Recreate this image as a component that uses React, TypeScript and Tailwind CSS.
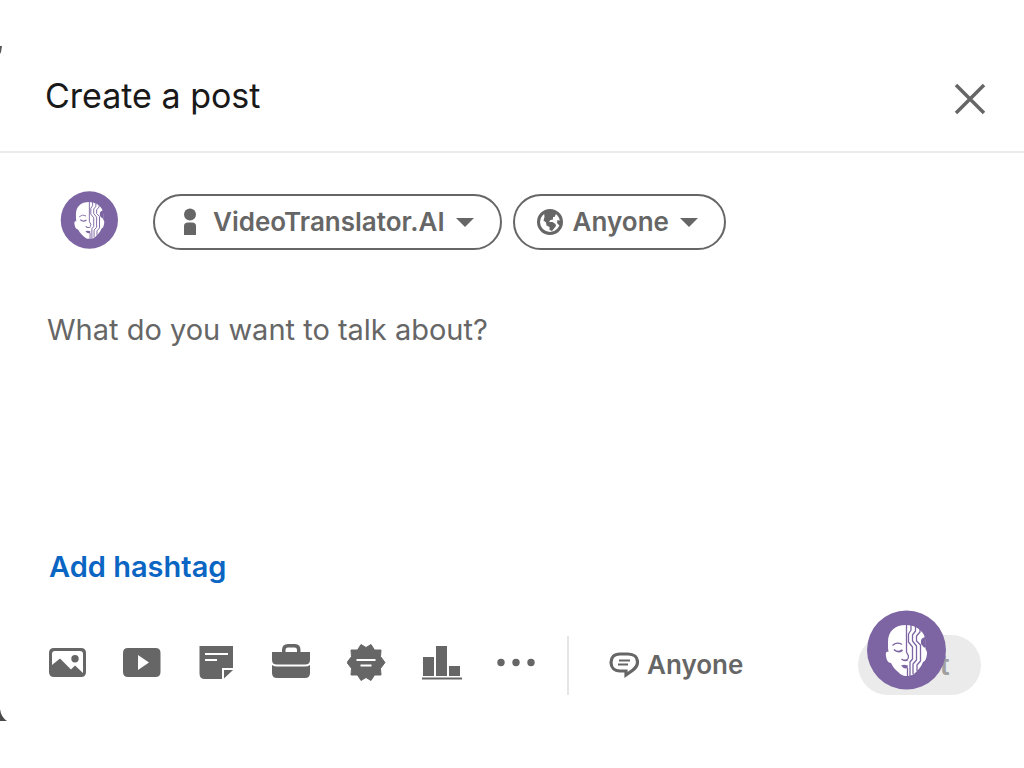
import React from "react";

function Avatar({ className }: { className: string }) {
  return (
    <svg viewBox="0 0 80 80" className={className} role="img" aria-label="VideoTranslator.AI">
      <circle cx="40.500" cy="40" r="39.500" fill="#7c65a2" />
      <path
        d="M40 15C29 15 22 21 22 32C22 36 22 39 22.500 42C20 41 19.500 43 20 46C20.500 50 22 53 25 53C27 58 32 62 35 64.500C37 66 39 66 41 66C44 66 48 65 51 61C54 58 56 55 57 52C59.500 51 60.500 48 61 44C61.500 42 60.500 41 59.500 39C60 35 60 30 58 25C55 19 48 15 40 15Z"
        fill="#fff"
      />
      <g fill="none" stroke="#7c65a2" strokeWidth="1.300" strokeLinejoin="round">
        <path d="M40.500 15V42L42.500 46L42 49M41.500 58V66" />
        <path d="M45 15V20L42.500 24V32L46.500 37V49L44 52V66" />
        <path d="M49.500 16V21L46.500 25V31L50.500 36V50L47 54V64" />
        <path d="M54 19V22L50.500 26V31L54.500 35V51L51 55V61" />
        <path d="M26.500 35.500Q31 31.500 36 34.500" strokeWidth="1.200" />
        <path d="M28 39.500Q32 43.500 36.500 40" strokeWidth="1.700" />
        <path d="M35.500 49Q38.500 51.500 42 49.500" strokeWidth="1.500" />
      </g>
      <path d="M59.500 27L56.500 28L55 30V34L58 37.500H60Z" fill="#7c65a2" />
      <path d="M35 55.500L38 54.800L42 55.500L41.500 58Q38 59.500 35 55.500Z" fill="#7c65a2" />
    </svg>
  );
}

function Caret() {
  return (
    <svg viewBox="0 0 18 9" className="h-[9px] w-[18px]" fill="currentColor" aria-hidden="true">
      <path d="M0 0H18L9 9Z" />
    </svg>
  );
}

const tools = [
  {
    label: "Add a photo",
    art: (
      <path
        fillRule="evenodd"
        d="M7 5H34Q39 5 39 10V29Q39 34 34 34H7Q2 34 2 29V10Q2 5 7 5ZM8 8Q5 8 5 11V22L13 15.500L24 26.500L28 22.500L36 30V11Q36 8 33 8ZM28 12A3.700 3.700 0 1 1 28 19.400A3.700 3.700 0 1 1 28 12Z"
      />
    ),
  },
  {
    label: "Add a video",
    art: <path fillRule="evenodd" d="M6 5H33.500Q38.500 5 38.500 10V29Q38.500 34 33.500 34H6Q1 34 1 29V10Q1 5 6 5ZM16 12V27L27 19.500Z" />,
  },
  {
    label: "Add a document",
    art: (
      <>
        <path fillRule="evenodd" d="M2.500 3H36V25H25V36H8Q2.500 36 2.500 30.500ZM8 10V12H31V10ZM8 16V18H20V16Z" />
        <path d="M27 27H36L27 35.500Z" />
      </>
    ),
  },
  {
    label: "Share a job",
    art: (
      <>
        <path d="M10 9V7Q10 1 16 1H23Q28.500 1 28.500 7V9H38V17Q38 21.500 33 21.500H5Q0 21.500 0 17V9ZM13.500 9H25V7Q25 4.500 22.500 4.500H16Q13.500 4.500 13.500 7Z" fillRule="evenodd" />
        <path d="M0 22Q2 23.500 5 23.500H33Q36 23.500 38 22V30Q38 35 33 35H5Q0 35 0 30Z" />
      </>
    ),
  },
  {
    label: "Celebrate an occasion",
    art: (
      <>
        <path
          d="M14 1.500L19 4.500L24 1.500L27.500 7H34L33.500 13.500L38 19.500L33.500 25.500L34 32H27.500L24 37.500L19 34.500L14 37.500L10.500 32H4L4.500 25.500L0 19.500L4.500 13.500L4 7H10.500Z"
          stroke="currentColor"
          strokeLinejoin="round"
        />
        <path d="M9.500 17H28.500M13.500 22.500H24.500" stroke="#fff" strokeWidth="2" />
      </>
    ),
  },
  {
    label: "Create a poll",
    art: <path d="M1 14H12V33H1ZM14 3H25V33H14ZM27 23H38V33H27ZM0 34.500H40V36.500H0Z" />,
  },
  {
    label: "More options",
    art: (
      <>
        <circle cx="4" cy="19.500" r="3.700" />
        <circle cx="19" cy="19.500" r="3.700" />
        <circle cx="34" cy="19.500" r="3.700" />
      </>
    ),
  },
];

export default function App() {
  return (
    <div className="relative overflow-hidden bg-white pt-10 pb-12 font-['Inter','Liberation_Sans',sans-serif] text-[#666]">
      <svg viewBox="0 0 2 8" className="absolute top-[46px] left-0 h-2 w-0.5" fill="#555" aria-hidden="true">
        <path d="M0 0H2L1 6L0 8Z" />
      </svg>
      <svg viewBox="0 0 7 12" className="absolute bottom-[22px] left-0 h-3 w-[7px]" fill="#4a4a4a" aria-hidden="true">
        <path d="M0 0Q1 8 7 12H0Z" />
      </svg>
      <section role="dialog" aria-labelledby="post-title">
        <header className="flex h-[113px] items-center justify-between border-b-2 border-[#ebebeb] pr-[38px] pl-[45px]">
          <h1 id="post-title" className="text-[34px] leading-[44px] text-[#191919]">
            Create a post
          </h1>
          <button type="button" aria-label="Close" className="mt-1.5">
            <svg viewBox="0 0 32 32" className="size-8" fill="none" stroke="currentColor" strokeWidth="3.500">
              <path d="M2 2L30 30M30 2L2 30" />
            </svg>
          </button>
        </header>

        <div className="flex items-start pt-[38px] pl-[60px]">
          <Avatar className="mr-[35px] size-[58px] shrink-0" />
          <div className="flex gap-[11px] pt-[3px] text-[26px] leading-8 font-semibold">
            <button type="button" className="flex h-14 items-center rounded-full border-2 border-[#666] pr-[26px] pl-7 whitespace-nowrap">
              <svg viewBox="0 0 14 28" className="mr-4 h-7 w-3.5" fill="currentColor" aria-hidden="true">
                <circle cx="7" cy="6.500" r="6" />
                <path d="M1 27V18Q1 14.500 5 14.500H9Q13 14.500 13 18V27Z" />
              </svg>
              <span className="mr-[11px]">VideoTranslator.AI</span>
              <Caret />
            </button>
            <button type="button" className="flex h-14 items-center rounded-full border-2 border-[#666] pr-[26px] pl-[22px] whitespace-nowrap">
              <svg viewBox="0 0 26 26" className="mr-2.5 size-[26px]" aria-hidden="true">
                <circle cx="13" cy="13" r="11.500" fill="none" stroke="currentColor" strokeWidth="3" />
                <path
                  fill="currentColor"
                  d="M7 3L17 2L19 5L17.500 8H16V10.500L13.500 11L12 13H15.500L18.500 15L19 17L15 22L12.500 21V18L9.500 16.500L9 13.500L6.500 11.500L7.500 8ZM20.500 11L24 12L23 17L20 14Z"
                />
              </svg>
              <span className="mr-[11px]">Anyone</span>
              <Caret />
            </button>
          </div>
        </div>

        <textarea
          aria-label="Post text"
          placeholder="What do you want to talk about?"
          className="mt-[62px] block h-[237px] w-full resize-none px-[47px] text-[29px] leading-9 outline-none placeholder:text-[#666]"
        />

        <div className="pl-[49px]">
          <button type="button" className="block text-[29px] leading-9 font-semibold text-[#0a66c2]">
            Add hashtag
          </button>
        </div>

        <footer className="mt-[50px] flex items-center pr-[43px] pl-[47px]">
          <div className="flex gap-[35px] pb-1">
            {tools.map((tool) => (
              <button key={tool.label} type="button" aria-label={tool.label}>
                <svg viewBox="0 0 40 40" className="size-10" fill="currentColor">
                  {tool.art}
                </svg>
              </button>
            ))}
          </div>
          <div className="ml-[30px] h-[59px] w-0.5 bg-[#e5e5e5]" />
          <button type="button" className="ml-10 flex items-center gap-2 text-[26px] leading-8 font-semibold">
            <svg viewBox="0 0 30 28" className="h-7 w-[30px]" aria-hidden="true">
              <path d="M11 3H19C25 3 28.500 6.500 28.500 11C28.500 14 27 16.500 24 19L17 24V20H11C5 20 2 16 2 11.500C2 6.500 5 3 11 3Z" fill="none" stroke="currentColor" strokeWidth="3.200" />
              <path d="M10 9.500H21M9 13.500H19" stroke="currentColor" strokeWidth="1.800" />
            </svg>
            Anyone
          </button>
          <div className="relative ml-auto">
            <button type="button" disabled className="block h-[60px] w-[123px] rounded-full bg-[#ebebeb] text-[28px] leading-9 font-semibold text-[#a0a0a0]">
              Post
            </button>
            <Avatar className="absolute -top-[25px] left-2 size-20" />
          </div>
        </footer>
      </section>
    </div>
  );
}
